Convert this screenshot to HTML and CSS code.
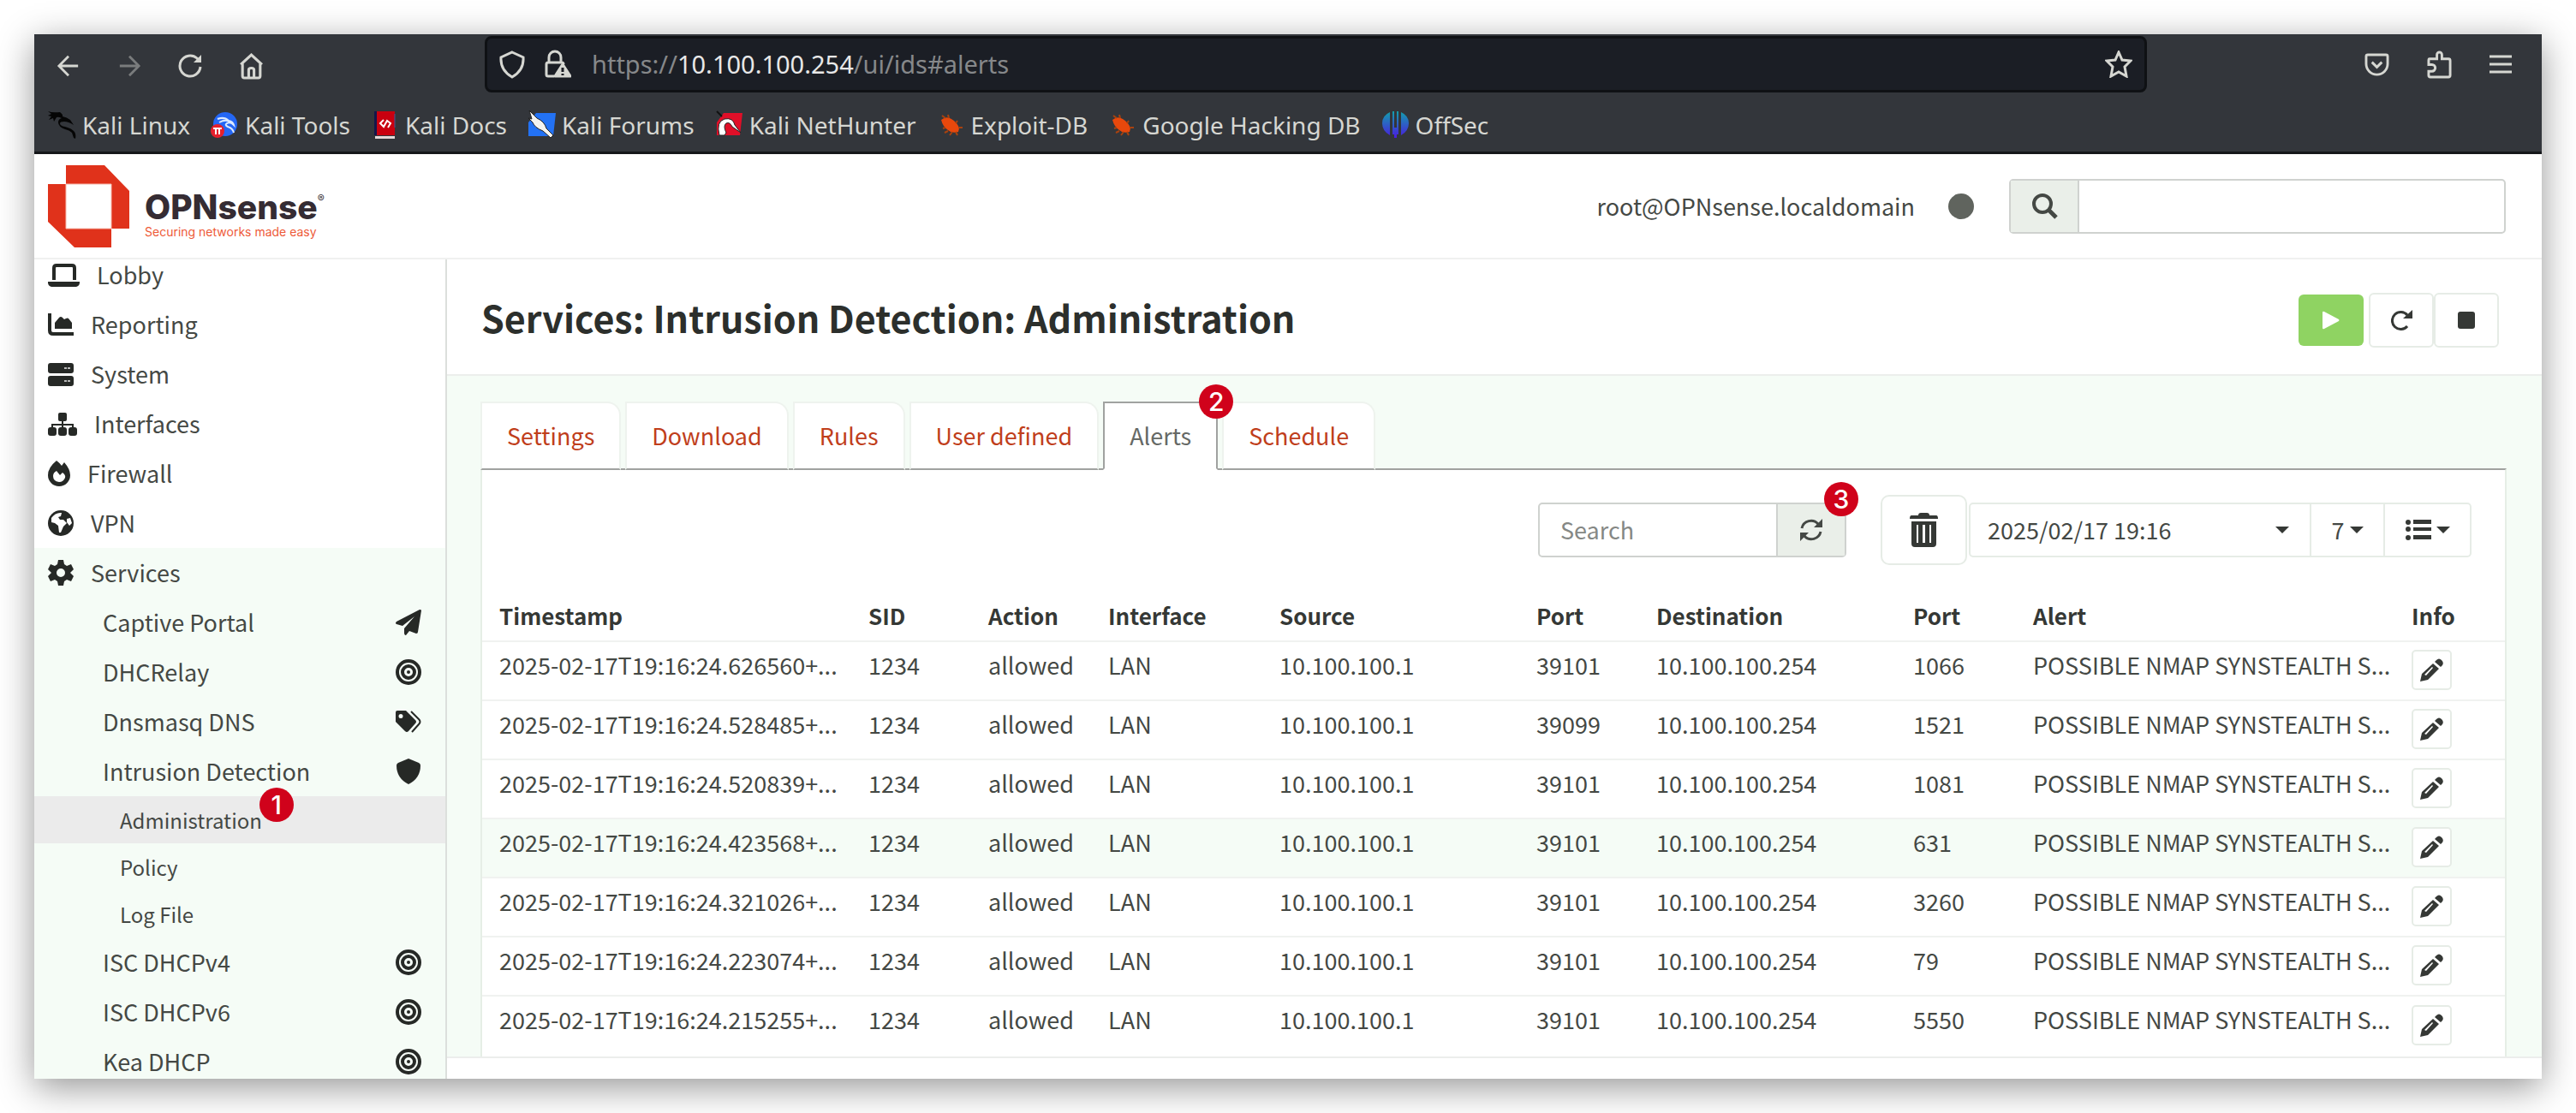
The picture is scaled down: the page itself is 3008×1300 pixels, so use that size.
FILE: index.html
```html
<!DOCTYPE html>
<html lang="en">
<head>
<meta charset="utf-8">
<title>Administration | Intrusion Detection | Services | OPNsense</title>
<link rel="stylesheet" href="styles.css">
</head>
<body>
<svg class="sprite" aria-hidden="true">
  <symbol id="i-back" viewBox="0 0 28 28"><path d="M26 14H2M14 2 2 14l12 12"/></symbol>
  <symbol id="i-fwd" viewBox="0 0 28 28"><path d="M2 14h24M14 2l12 12-12 12"/></symbol>
  <symbol id="i-reload" viewBox="0 0 28 28"><path d="M26 15A12 12 0 1 1 22 5l3 3"/><path d="M27 1v9h-9z" fill="currentColor" stroke="none"/></symbol>
  <symbol id="i-home" viewBox="0 0 28 30"><path d="M2 13 14 2l12 11M4 12v14q0 2 2 2h16q2 0 2-2V12M11 28v-9q0-2 3-2t3 2v9"/></symbol>
  <symbol id="i-shield-o" viewBox="0 0 30 33"><path d="M15 2 28 8q1 15-13 23Q1 23 2 8z"/></symbol>
  <symbol id="i-lock" viewBox="0 0 32 34"><path d="M12 31H5q-2 0-2-2V17q0-2 2-2h16q2 0 2 2M6 15V9a7 7 0 0 1 14 0v6"/><path d="M22 17l9 14H13z" fill="currentColor" stroke-linejoin="round"/><path d="M22 21v5M22 28v2" stroke="#1b1e25"/></symbol>
  <symbol id="i-star" viewBox="0 0 32 32"><path d="m16 2 4 9 10 1-7 7 2 11-9-5-9 5 2-11-7-7 10-1z"/></symbol>
  <symbol id="i-pocket" viewBox="0 0 30 28"><path d="M4 2h22q2 0 2 2v9a13 13 0 0 1-26 0V4q0-2 2-2zM9 11l6 6 6-6"/></symbol>
  <symbol id="i-puzzle" viewBox="0 0 30 34"><path d="M3 10h9V5a3 3 0 0 1 6 0v5h8q2 0 2 2v18q0 2-2 2H4q-2 0-2-2v-5h4a4 4 0 0 0 0-8H2v-5q0-2 1-2z"/></symbol>
  <symbol id="i-menu" viewBox="0 0 26 22"><path d="M0 2h26M0 11h26M0 20h26"/></symbol>

  <symbol id="b-kali" viewBox="0 0 33 33"><path d="M0 1q5 2 14 1 4 3 3 5 5 1 9 4l4 6q-6-4-11-4-5 0-5 2 0 3 6 4 8 2 11 6 2 3 1 8l-2-1-2-6q-3-3-8-4-8-3-8-8 0-4 4-5-4-2-6-1l-3 5-1-4-5 2 3-4-4-1 4-2z" fill="#050505"/></symbol>
  <symbol id="b-tools" viewBox="0 0 33 33"><circle cx="17" cy="16" r="14" fill="#2467f5"/><path d="M8 10q8-3 13 2 5 1 6 5-4-4-8-2-3 2 1 4 6 2 7 7M10 14q7-4 12-1" fill="none" stroke="#dbe9ff" stroke-width="2"/><circle cx="8" cy="24" r="8" fill="#e4202c"/><path d="M3 21h10M6 21v7M10 21v7" stroke="#fff" stroke-width="2"/></symbol>
  <symbol id="b-docs" viewBox="0 0 33 33"><path d="M4 1h4v28H4z" fill="#14164a"/><path d="M7 1h21v28H7z" fill="#c9000f"/><path d="M5 30h23v3H5z" fill="#e3d9d9"/><path d="M28 4v16" stroke="#3c5a9a" stroke-width="1"/><path d="m15 11-4 4 4 4 4-7 4 3-3 5" fill="none" stroke="#fff" stroke-width="2"/></symbol>
  <symbol id="b-forums" viewBox="0 0 33 33"><path d="M10 3h23L30 30H1V14z" fill="#2372f4"/><path d="M2 0l9 9q9 4 11 12l8 8-3 3-9-8Q8 20 6 14L1 9l4 1z" fill="#f4f4f0" stroke="#222" stroke-width="1"/></symbol>
  <symbol id="b-hunter" viewBox="0 0 33 33"><path d="M10 3h22l-3 26H2V14z" fill="#e00f28"/><path d="M5 29Q1 13 11 10q10-2 12 7l7 9-10-7q-3-6-7-4-4 3 0 11l-2 3z" fill="#fff" stroke="#222" stroke-width="1"/><path d="M2 1l6 6" stroke="#111" stroke-width="2"/></symbol>
  <symbol id="b-exploit" viewBox="0 0 33 33"><path d="M5 11q6-5 12-1 7 4 9 11l-1 4q-8 2-12-2-6-4-8-12z" fill="#e8480c"/><path d="m10 9-4-3m8 3-1-4m9 10 2-3m1 8h5M10 20l-3 1m6 3-4 2m9-1-3 4m7-4 2 4" stroke="#a8420f" stroke-width="2"/></symbol>
  <symbol id="b-offsec" viewBox="0 0 33 33"><linearGradient id="og" x1="0" y1="0" x2="0" y2="1"><stop offset="0" stop-color="#12a0ac"/><stop offset="1" stop-color="#4a1be0"/></linearGradient><path d="M10 2v27Q1 24 1 15T10 2zM23 2v27q9-5 9-14T23 2zM13 1h2v27h-2zM18 1h2v27h-2zM15 20h3v12h-3z" fill="url(#og)"/></symbol>

  <symbol id="s-laptop" viewBox="0 0 37 27"><path d="M7 19V5q0-3 3-3h18q3 0 3 3v14" fill="none" stroke="currentColor" stroke-width="4"/><path d="M0 21h37v1q0 4-4 5H4q-4-1-4-5z"/></symbol>
  <symbol id="s-chart" viewBox="0 0 30 28"><path d="M2 1v20q0 4 4 4h24" fill="none" stroke="currentColor" stroke-width="4"/><path d="M8 19v-7l5-6q2-2 4 0l2 2 2-1q2-1 3 0l4 5v7z"/></symbol>
  <symbol id="s-server" viewBox="0 0 30 27"><path d="M3 0h24q3 0 3 3v6q0 3-3 3H3q-3 0-3-3V3q0-3 3-3zM3 15h24q3 0 3 3v6q0 3-3 3H3q-3 0-3-3v-6q0-3 3-3z"/><path d="M19 5h3v2h-3zM23 5h3v2h-3zM19 20h3v2h-3zM23 20h3v2h-3z" fill="#bbb"/></symbol>
  <symbol id="s-site" viewBox="0 0 34 27"><rect x="12" width="10" height="10" rx="2"/><rect y="17" width="10" height="10" rx="3"/><rect x="12" y="17" width="10" height="10" rx="3"/><rect x="24" y="17" width="10" height="10" rx="3"/><path d="M17 8v10M5 18v-4h24v4" fill="none" stroke="currentColor" stroke-width="2"/></symbol>
  <symbol id="s-fire" viewBox="0 0 26 30"><path d="M10 0q4 3 6 6l3-4q7 8 7 15a13 13 0 0 1-26 0Q0 8 10 0z"/><path d="M13 25q-7-1-7-7 0-4 4-6l4 5 3-3q4 3 3 6-2 5-7 5z" fill="#fff"/></symbol>
  <symbol id="s-globe" viewBox="0 0 30 30"><circle cx="15" cy="15" r="15"/><path d="M4 9q5-7 12-6l-1 4-3 1 2 3h4l4 4-4 4-3 7h-2l-1-8-4-3-4-1zM22 10l4-1 2 6-3 3-3-4z" fill="#fff"/></symbol>
  <symbol id="s-gear" viewBox="0 0 30 30"><path fill-rule="evenodd" d="M12 0h6l1 5 3 2 5-2 3 6-4 4 4 4-3 6-5-2-3 2-1 5h-6l-1-5-3-2-5 2-3-6 4-4-4-4 3-6 5 2 3-2zM15 10a5 5 0 1 0 0 10 5 5 0 0 0 0-10z"/></symbol>
  <symbol id="s-plane" viewBox="0 0 30 30"><path d="M30 1l-4 25q0 2-2 2l-8-3-4 5q-2 0-2-3v-5L22 8 8 19l-7-2q-2-1 0-3L28 0q2 0 2 1z"/></symbol>
  <symbol id="s-target" viewBox="0 0 30 30"><g fill="none" stroke="currentColor"><circle cx="15" cy="15" r="13" stroke-width="4"/><circle cx="15" cy="15" r="7" stroke-width="4"/></g><circle cx="15" cy="15" r="2"/></symbol>
  <symbol id="s-tags" viewBox="0 0 30 26"><path fill-rule="evenodd" d="M0 2q0-2 2-2h10l11 11q2 2 0 4l-8 9q-2 2-4 0L0 13zM6 4a2 2 0 1 0 0 5 2 2 0 0 0 0-5z"/><path d="M18 1l9 9q3 3 0 6l-8 9" fill="none" stroke="currentColor" stroke-width="2"/></symbol>
  <symbol id="s-shield" viewBox="0 0 28 30"><path d="M14 0l12 5q2 1 2 3 0 15-14 22Q0 23 0 8q0-2 2-3z"/></symbol>

  <symbol id="t-search" viewBox="0 0 31 31"><circle cx="13" cy="13" r="10" fill="none" stroke="currentColor" stroke-width="4"/><path d="m20 20 9 9" stroke="currentColor" stroke-width="5"/></symbol>
  <symbol id="t-play" viewBox="0 0 20 22"><path d="M0 2q0-2 2-1l17 9q1 1 0 2L2 21q-2 1-2-1z"/></symbol>
  <symbol id="t-redo" viewBox="0 0 25 24"><path d="M19 19A10 10 0 1 1 19 6" fill="none" stroke="currentColor" stroke-width="3"/><path d="M25 0v10H14z"/></symbol>
  <symbol id="t-stop" viewBox="0 0 20 20"><rect width="20" height="20" rx="3"/></symbol>
  <symbol id="t-sync" viewBox="0 0 28 28"><path d="M3 12A11 11 0 0 1 22 7M25 16A11 11 0 0 1 6 21" fill="none" stroke="currentColor" stroke-width="3"/><path d="M27 1v10H17zM1 27V17h10z"/></symbol>
  <symbol id="t-trash" viewBox="0 0 33 40"><path fill-rule="evenodd" d="M10 3q0-3 3-3h7q3 0 3 3h8q2 0 2 4H0q0-4 2-4zM2 10h29v26q0 4-4 4H6q-4 0-4-4zM8 14v21h2V14zM15 14v21h3V14zM23 14v21h2V14z"/></symbol>
  <symbol id="t-caret" viewBox="0 0 16 8"><path d="M0 0h16L8 8z"/></symbol>
  <symbol id="t-list" viewBox="0 0 30 25"><path d="M9 1h21v5H9zM9 10h21v4H9zM9 19h21v5H9z"/><circle cx="3" cy="4" r="3"/><circle cx="3" cy="12" r="3"/><circle cx="3" cy="22" r="3"/></symbol>
  <symbol id="t-pencil" viewBox="0 0 27 27"><path fill-rule="evenodd" d="M19 2q3-3 6 0t1 6l-2 2-7-6zM15 6l7 6L9 25l-9 2 2-9zM14 10 5 19l2 1 8-9z"/></symbol>
</svg>

<div class="window">
  <header class="chrome">
    <div class="toolbar">
      <div class="nav-buttons">
        <button aria-label="Back"><svg width="28" height="26"><use href="#i-back"/></svg></button>
        <button class="dim" aria-label="Forward"><svg width="28" height="26"><use href="#i-fwd"/></svg></button>
        <button aria-label="Reload"><svg width="28" height="28"><use href="#i-reload"/></svg></button>
        <button aria-label="Home"><svg width="29" height="31"><use href="#i-home"/></svg></button>
      </div>
      <div class="url-bar">
        <svg width="30" height="33"><use href="#i-shield-o"/></svg>
        <svg width="32" height="34"><use href="#i-lock"/></svg>
        <p class="url">https://<b>10.100.100.254</b>/ui/ids#alerts</p>
        <button aria-label="Bookmark this page"><svg width="32" height="32"><use href="#i-star"/></svg></button>
      </div>
      <div class="tool-buttons">
        <button aria-label="Save to Pocket"><svg width="29" height="27"><use href="#i-pocket"/></svg></button>
        <button aria-label="Extensions"><svg width="29" height="33"><use href="#i-puzzle"/></svg></button>
        <button aria-label="Open menu"><svg width="26" height="22"><use href="#i-menu"/></svg></button>
      </div>
    </div>
    <nav class="bookmarks" aria-label="Bookmarks">
      <a href="#"><svg><use href="#b-kali"/></svg>Kali Linux</a>
      <a href="#"><svg><use href="#b-tools"/></svg>Kali Tools</a>
      <a href="#"><svg><use href="#b-docs"/></svg>Kali Docs</a>
      <a href="#"><svg><use href="#b-forums"/></svg>Kali Forums</a>
      <a href="#"><svg><use href="#b-hunter"/></svg>Kali NetHunter</a>
      <a href="#"><svg><use href="#b-exploit"/></svg>Exploit-DB</a>
      <a href="#"><svg><use href="#b-exploit"/></svg>Google Hacking DB</a>
      <a href="#"><svg><use href="#b-offsec"/></svg>OffSec</a>
    </nav>
  </header>

  <header class="app-head">
    <a class="brand" href="#">
      <svg class="mark" viewBox="0 0 95 96" width="95" height="96"><path d="M21 0h45l29 30v44H74v22H31L0 66V22h21z" fill="#e0321b"/><path d="M21 22h53v52H21z" fill="#fff" stroke="#f6b9ad" stroke-width="1"/></svg>
      <span class="brand-text"><span class="wordmark">OPNsense<sup>®</sup></span><span class="tagline">Securing networks made easy</span></span>
    </a>
    <div class="account">
      <span>root@OPNsense.localdomain</span>
      <span class="status-dot"></span>
      <div class="head-search">
        <label for="q" aria-label="Search the menu"><svg width="31" height="31"><use href="#t-search"/></svg></label>
        <input id="q" type="text">
      </div>
    </div>
  </header>

  <div class="body">
    <nav class="sidebar" aria-label="Main menu">
      <ul>
        <li class="first"><a href="#"><svg width="37" height="27"><use href="#s-laptop"/></svg>Lobby</a></li>
        <li><a href="#"><svg width="30" height="28"><use href="#s-chart"/></svg>Reporting</a></li>
        <li><a href="#"><svg width="30" height="27"><use href="#s-server"/></svg>System</a></li>
        <li><a href="#"><svg width="34" height="27"><use href="#s-site"/></svg>Interfaces</a></li>
        <li><a href="#"><svg width="26" height="30"><use href="#s-fire"/></svg>Firewall</a></li>
        <li><a href="#"><svg width="30" height="30"><use href="#s-globe"/></svg>VPN</a></li>
        <li class="open"><a href="#"><svg width="30" height="30"><use href="#s-gear"/></svg>Services</a>
          <ul class="level2">
            <li><a href="#">Captive Portal<svg width="30" height="30"><use href="#s-plane"/></svg></a></li>
            <li><a href="#">DHCRelay<svg width="30" height="30"><use href="#s-target"/></svg></a></li>
            <li><a href="#">Dnsmasq DNS<svg width="30" height="26"><use href="#s-tags"/></svg></a></li>
            <li><a href="#">Intrusion Detection<svg width="30" height="30"><use href="#s-shield"/></svg></a>
              <ul class="level3">
                <li><a class="active" href="#"><span class="pin-host">Administration<span class="pin pin-1">1</span></span></a></li>
                <li><a href="#">Policy</a></li>
                <li><a href="#">Log File</a></li>
              </ul>
            </li>
            <li><a href="#">ISC DHCPv4<svg width="30" height="30"><use href="#s-target"/></svg></a></li>
            <li><a href="#">ISC DHCPv6<svg width="30" height="30"><use href="#s-target"/></svg></a></li>
            <li><a href="#">Kea DHCP<svg width="30" height="30"><use href="#s-target"/></svg></a></li>
          </ul>
        </li>
      </ul>
    </nav>

    <main>
      <div class="page-head">
        <h1>Services: Intrusion Detection: Administration</h1>
        <div class="service-buttons">
          <button class="play" aria-label="Running"><svg width="20" height="22"><use href="#t-play"/></svg></button>
          <button aria-label="Restart"><svg width="25" height="24"><use href="#t-redo"/></svg></button>
          <button aria-label="Stop"><svg width="20" height="20"><use href="#t-stop"/></svg></button>
        </div>
      </div>
      <div class="content">
        <nav class="tabs" aria-label="Sections">
          <a href="#">Settings</a>
          <a href="#">Download</a>
          <a href="#">Rules</a>
          <a href="#">User defined</a>
          <a href="#" class="current">Alerts<span class="pin pin-2">2</span></a>
          <a href="#">Schedule</a>
        </nav>
        <section class="panel">
          <div class="grid-tools">
            <div class="search-group">
              <input type="text" placeholder="Search" aria-label="Search alerts">
              <button aria-label="Refresh"><svg width="28" height="28"><use href="#t-sync"/></svg></button>
              <span class="pin pin-3">3</span>
            </div>
            <button class="trash" aria-label="Delete log"><svg width="33" height="40"><use href="#t-trash"/></svg></button>
            <div class="tool-group">
              <div class="select-wrap">
                <select aria-label="Log file"><option>2025/02/17 19:16</option></select>
                <svg width="16" height="8"><use href="#t-caret"/></svg>
              </div>
              <button class="count">7<svg width="16" height="8"><use href="#t-caret"/></svg></button>
              <button class="columns" aria-label="Columns"><svg width="30" height="25"><use href="#t-list"/></svg><svg width="16" height="8"><use href="#t-caret"/></svg></button>
            </div>
          </div>
          <table>
            <colgroup><col class="c-time"><col class="c-s"><col class="c-s"><col class="c-m"><col class="c-l"><col class="c-s"><col class="c-l"><col class="c-s"><col><col class="c-info"></colgroup>
            <thead><tr><th>Timestamp</th><th>SID</th><th>Action</th><th>Interface</th><th>Source</th><th>Port</th><th>Destination</th><th>Port</th><th>Alert</th><th>Info</th></tr></thead>
            <tbody>
              <tr><td>2025-02-17T19:16:24.626560+...</td><td>1234</td><td>allowed</td><td>LAN</td><td>10.100.100.1</td><td>39101</td><td>10.100.100.254</td><td>1066</td><td>POSSIBLE NMAP SYNSTEALTH S...</td><td><button aria-label="Info"><svg width="27" height="27"><use href="#t-pencil"/></svg></button></td></tr>
              <tr><td>2025-02-17T19:16:24.528485+...</td><td>1234</td><td>allowed</td><td>LAN</td><td>10.100.100.1</td><td>39099</td><td>10.100.100.254</td><td>1521</td><td>POSSIBLE NMAP SYNSTEALTH S...</td><td><button aria-label="Info"><svg width="27" height="27"><use href="#t-pencil"/></svg></button></td></tr>
              <tr><td>2025-02-17T19:16:24.520839+...</td><td>1234</td><td>allowed</td><td>LAN</td><td>10.100.100.1</td><td>39101</td><td>10.100.100.254</td><td>1081</td><td>POSSIBLE NMAP SYNSTEALTH S...</td><td><button aria-label="Info"><svg width="27" height="27"><use href="#t-pencil"/></svg></button></td></tr>
              <tr class="hover"><td>2025-02-17T19:16:24.423568+...</td><td>1234</td><td>allowed</td><td>LAN</td><td>10.100.100.1</td><td>39101</td><td>10.100.100.254</td><td>631</td><td>POSSIBLE NMAP SYNSTEALTH S...</td><td><button aria-label="Info"><svg width="27" height="27"><use href="#t-pencil"/></svg></button></td></tr>
              <tr><td>2025-02-17T19:16:24.321026+...</td><td>1234</td><td>allowed</td><td>LAN</td><td>10.100.100.1</td><td>39101</td><td>10.100.100.254</td><td>3260</td><td>POSSIBLE NMAP SYNSTEALTH S...</td><td><button aria-label="Info"><svg width="27" height="27"><use href="#t-pencil"/></svg></button></td></tr>
              <tr><td>2025-02-17T19:16:24.223074+...</td><td>1234</td><td>allowed</td><td>LAN</td><td>10.100.100.1</td><td>39101</td><td>10.100.100.254</td><td>79</td><td>POSSIBLE NMAP SYNSTEALTH S...</td><td><button aria-label="Info"><svg width="27" height="27"><use href="#t-pencil"/></svg></button></td></tr>
              <tr><td>2025-02-17T19:16:24.215255+...</td><td>1234</td><td>allowed</td><td>LAN</td><td>10.100.100.1</td><td>39101</td><td>10.100.100.254</td><td>5550</td><td>POSSIBLE NMAP SYNSTEALTH S...</td><td><button aria-label="Info"><svg width="27" height="27"><use href="#t-pencil"/></svg></button></td></tr>
            </tbody>
          </table>
        </section>
      </div>
      <footer class="foot"></footer>
    </main>
  </div>
</div>
</body>
</html>
```
FILE: styles.css
```css
* { box-sizing: border-box; }

body {
  margin: 0;
  padding: 40px;
  background: #fff;
  color: #444844;
  font: 27px/36px "Noto Sans CJK SC", "Noto Sans", sans-serif;
}

button, input, select { font: inherit; color: inherit; margin: 0; }
button { padding: 0; border: 0; background: none; }
a { color: inherit; text-decoration: none; }
ul { margin: 0; padding: 0; list-style: none; }
svg { display: block; flex: none; fill: currentColor; }
.sprite { position: absolute; width: 0; height: 0; }

.window {
  display: flex;
  flex-direction: column;
  height: calc(100vh - 80px);
  overflow: hidden;
  background: #fff;
  box-shadow: 0 10px 40px rgba(0, 0, 0, .42);
}

/* browser chrome */
.chrome {
  background: #33363b;
  color: #d6d7d2;
  border-bottom: 3px solid #15171a;
  font-family: "Noto Sans", sans-serif;
}
.toolbar { display: flex; align-items: center; height: 70px; padding: 0 35px 0 26px; }
.toolbar svg { fill: none; stroke: currentColor; stroke-width: 3; }
.nav-buttons { display: flex; align-items: center; gap: 43px; flex: 0 0 500px; padding-top: 4px; }
.dim { color: #7a7c7d; }
.url-bar {
  display: flex;
  align-items: center;
  flex: 1;
  height: 66px;
  padding: 0 14px;
  border: 3px solid #0f1114;
  border-radius: 8px;
  background: #1b1e25;
}
.url-bar > svg + svg { margin-left: 22px; }
.url { flex: 1; margin: 0 0 0 24px; font-size: 29px; color: #86888a; }
.url b { font-weight: 400; color: #e8e8e8; }
.tool-buttons { display: flex; align-items: center; justify-content: flex-end; gap: 44px; flex: 0 0 426px; }
.bookmarks { display: flex; align-items: center; gap: 24px; height: 67px; padding: 4px 16px 0; font-size: 28px; }
.bookmarks a { display: flex; align-items: center; gap: 7px; }
.bookmarks svg { width: 33px; height: 33px; }

/* application header */
.app-head {
  display: flex;
  justify-content: space-between;
  align-items: center;
  height: 123px;
  padding: 0 42px 0 16px;
  border-bottom: 2px solid #f0f1f0;
}
.brand { display: flex; align-items: center; gap: 18px; }
.brand-text { display: flex; flex-direction: column; padding-top: 24px; }
.wordmark { font: 800 39px/36px "Inter", sans-serif; color: #352c33; }
.wordmark sup { font-size: 12px; font-weight: 400; line-height: 0; vertical-align: 20px; }
.tagline { font: 14px/22px "Inter", sans-serif; color: #ee5a38; }
.account { display: flex; align-items: center; }
.status-dot { width: 30px; height: 30px; margin: 0 41px 0 39px; border-radius: 50%; background: #60645e; }
.head-search { display: flex; width: 580px; height: 64px; border: 2px solid #cfd2cf; border-radius: 5px; }
.head-search label { display: grid; place-items: center; width: 80px; border-right: 2px solid #cfd2cf; background: #eaefe9; }
.head-search input { flex: 1; min-width: 0; padding: 0 20px; border: 0; background: none; }

/* sidebar */
.body { display: flex; flex: 1; min-height: 0; }
.sidebar { flex: 0 0 482px; overflow: hidden; border-right: 2px solid #dcdfdc; }
.sidebar a { display: flex; align-items: center; gap: 20px; height: 58px; padding: 0 28px 0 16px; }
.sidebar .first a { height: 47px; padding-bottom: 11px; }
.sidebar svg { color: #262926; }
.open { background: #f5fcf6; }
.sidebar .level2 a { justify-content: space-between; padding-left: 80px; }
.sidebar .level3 a { height: 55px; padding-left: 100px; font-size: 24px; }
.sidebar .level3 .active { background: #ebebeb; }

/* page heading */
main { display: flex; flex-direction: column; flex: 1; min-width: 0; }
.page-head {
  display: flex;
  justify-content: space-between;
  align-items: center;
  height: 136px;
  padding: 0 50px 0 40px;
  border-bottom: 2px solid #eceeec;
}
h1 { margin: 0; font-size: 43px; line-height: 60px; font-weight: 700; color: #2c2f2c; }
.service-buttons { display: flex; align-items: center; margin-top: 8px; }
.service-buttons button {
  display: grid;
  place-items: center;
  width: 76px;
  height: 64px;
  border: 2px solid #e6ece6;
  border-radius: 6px;
  background: #fff;
  color: #353835;
}
.service-buttons .play { height: 60px; margin-right: 6px; border: 0; background: #8fd362; color: #fff; }

/* tabs */
.content { padding: 30px 41px 0 39px; background: #f5fcf6; }
.tabs { display: flex; gap: 5px; }
.tabs a {
  position: relative;
  height: 80px;
  padding: 0 29px;
  border: 2px solid #eef3ee;
  border-bottom-color: #a0a2a0;
  border-radius: 0 16px 0 0;
  background: #fff;
  color: #c03e1b;
  line-height: 76px;
}
.tabs .current { border-color: #a0a2a0; border-bottom-color: #fff; border-radius: 0; color: #666966; z-index: 1; }
.panel { margin-top: -2px; padding-bottom: 2px; border: 2px solid #e6eee6; border-top-color: #a0a2a0; border-bottom: 0; background: #fff; }

/* grid toolbar */
.grid-tools { display: flex; align-items: center; justify-content: flex-end; padding: 28px 39px 32px; height: 143px; }
.search-group { position: relative; display: flex; width: 360px; height: 64px; border: 2px solid #cfd2cf; border-radius: 5px; }
.search-group input { flex: 1; min-width: 0; padding: 0 24px; border: 0; background: none; }
.search-group input::placeholder { color: #858885; opacity: 1; }
.search-group button { display: grid; place-items: center; width: 80px; border-left: 2px solid #cfd2cf; background: #eaefe9; }
.trash {
  display: grid;
  place-items: center;
  width: 101px;
  height: 82px;
  margin: 0 2px 0 40px;
  border: 2px solid #e6ece6;
  border-radius: 10px;
  background: #fff;
  color: #353835;
}
.tool-group { display: flex; height: 64px; border: 2px solid #e6ece6; border-radius: 5px; }
.select-wrap { display: flex; align-items: center; width: 396px; padding-right: 24px; }
.select-wrap select { flex: 1; height: 60px; padding: 0 20px; border: 0; appearance: none; background: none; }
.tool-group button { display: flex; align-items: center; justify-content: center; gap: 6px; border-left: 2px solid #e6ece6; }
.tool-group svg { color: #353835; }
.count { width: 86px; }
.columns { width: 101px; }

/* alert table */
table { width: 100%; table-layout: fixed; border-collapse: collapse; }
th, td { padding: 0 0 0 20px; text-align: left; white-space: nowrap; }
th { height: 57px; padding-bottom: 2px; font-size: 26px; font-weight: 700; color: #353835; }
td { height: 69px; padding-bottom: 14px; border-top: 2px solid #f0f2f0; }
td:last-child { padding-bottom: 2px; }
td button {
  display: grid;
  place-items: center;
  width: 47px;
  height: 47px;
  border: 2px solid #e6ece6;
  border-radius: 5px;
  background: #fff;
  color: #353835;
}
.hover { background: #f5fcf6; }
.c-time { width: 431px; }
.c-s { width: 140px; }
.c-m { width: 200px; }
.c-l { width: 300px; }
.c-info { width: 129px; }
.foot { flex: 1; border-top: 2px solid #eceeec; }

/* numbered step markers */
.pin-host { position: relative; }
.pin {
  position: absolute;
  width: 40px;
  height: 40px;
  border-radius: 50%;
  background: #d0021b;
  color: #fff;
  font: 500 30px/40px "Inter", sans-serif;
  text-align: center;
}
.pin-1 { left: 98%; bottom: 16px; }
.pin-2 { right: -20px; top: -22px; }
.pin-3 { right: -16px; top: -26px; }
```
